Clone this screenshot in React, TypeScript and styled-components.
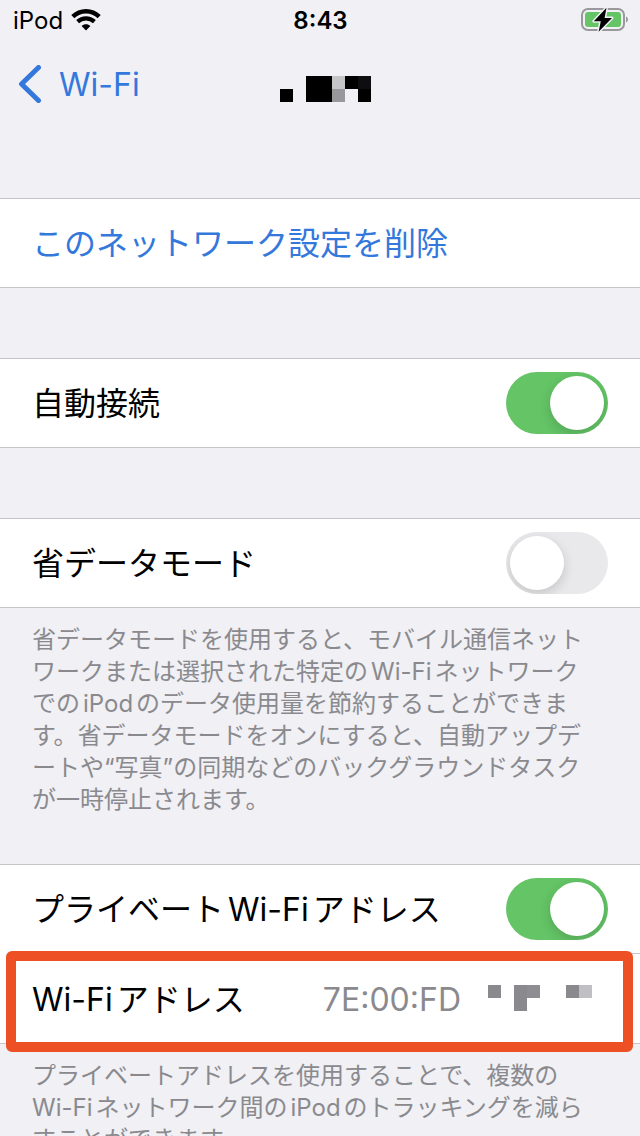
import React, { useState } from "react";
import styled, { createGlobalStyle } from "styled-components";

const GlobalStyle = createGlobalStyle`
  *, *::before, *::after { box-sizing: border-box; }
  body {
    margin: 0;
    background: #f0f0f5;
    color: #000;
    font-family: Inter, "Noto Sans CJK JP", sans-serif;
    font-weight: 400;
    text-autospace: normal;
  }
  button, input { font: inherit; }
`;

const Screen = styled.div`
  height: 100vh;
  overflow: hidden;
  display: flex;
  flex-direction: column;
  > * { flex-shrink: 0; }
`;

const StatusBar = styled.header`
  display: grid;
  grid-template-columns: 1fr auto 1fr;
  align-items: center;
  height: 40px;
  padding: 0 12px 0 13px;
  font-size: 24px;
`;

const Carrier = styled.div`
  display: flex;
  align-items: center;
  gap: 8px;
`;

const Clock = styled.time`
  font-weight: 600;
`;

const Battery = styled.svg`
  justify-self: end;
`;

const NavBar = styled.nav`
  display: grid;
  grid-template-columns: 1fr auto 1fr;
  align-items: center;
  height: 88px;
  padding: 0 18px;
`;

const BackLink = styled.a`
  display: flex;
  align-items: center;
  gap: 17px;
  color: #3478dc;
  font-size: 32px;
  text-decoration: none;
`;

const NetworkName = styled.h1`
  display: flex;
  margin: 10px 0 0 10px;
`;

const Settings = styled.main`
  display: flex;
  flex-direction: column;
  padding-top: 70px;
`;

const Group = styled.section`
  display: flex;
  flex-direction: column;
  padding-bottom: 70px;
`;

const NotedGroup = styled(Group)`
  padding-bottom: 48px;
`;

const Rows = styled.div`
  background: #fff;
  border-top: 1px solid #c6c6ca;
  border-bottom: 1px solid #c6c6ca;
`;

const Row = styled.div`
  position: relative;
  display: flex;
  align-items: center;
  justify-content: space-between;
  height: 88px;
  padding: 0 32px;
  font-size: 32px;
  line-height: 48px;
`;

const RowLabel = styled.label`
  padding-top: 2px;
`;

const AddressRow = styled(Row)`
  height: 90px;
  &::before {
    content: "";
    position: absolute;
    top: 0;
    left: 32px;
    right: 0;
    height: 1px;
    background: #c6c6ca;
  }
`;

const AddressText = styled.span`
  padding-top: 4px;
`;

const Highlight = styled.div`
  position: absolute;
  inset: -2px 7px -9px 6px;
  border: 10px solid #ee5026;
  border-radius: 6px;
  pointer-events: none;
`;

const RowButton = styled.button`
  display: block;
  width: 100%;
  height: 88px;
  padding: 2px 32px 0;
  border: 0;
  background: none;
  color: #3478dc;
  font-size: 32px;
  line-height: 48px;
  text-align: left;
`;

const Value = styled.div`
  display: flex;
  align-items: center;
  gap: 27px;
  padding-right: 16px;
  color: #8a8a8e;
`;

const Switch = styled.input`
  appearance: none;
  width: 102px;
  height: 62px;
  margin: 0;
  padding: 4px;
  border-radius: 31px;
  background: #e9e9eb;
  overflow: hidden;
  &::before {
    content: "";
    display: block;
    width: 54px;
    height: 54px;
    border-radius: 50%;
    background: #fff;
    box-shadow: 0 4px 12px rgba(0, 0, 0, 0.16);
  }
  &:checked { background: #64c466; }
  &:checked::before { margin-left: 40px; }
`;

const Note = styled.p`
  margin: 0;
  padding: 16px 32px 0;
  color: #8a8a8e;
  font-size: 24px;
  line-height: 32px;
  white-space: nowrap;
`;

type Cell = [column: number, row: number, color: string];

const MosaicDrawing = styled.svg`
  display: block;
`;

const Mosaic = ({ cells, columns, label }: { cells: Cell[]; columns: number; label: string }) => (
  <MosaicDrawing width={columns * 13} height={26} role="img" aria-label={label} shapeRendering="crispEdges">
    {cells.map(([column, row, color]) => (
      <rect key={`${column}-${row}`} x={column * 13} y={row * 13} width={13} height={13} fill={color} />
    ))}
  </MosaicDrawing>
);

const nameCells: Cell[] = [
  [0, 1, "#000"], [2, 0, "#000"], [3, 0, "#000"], [2, 1, "#000"], [3, 1, "#000"],
  [4, 0, "#c5c5c7"], [4, 1, "#98989a"], [5, 0, "#000"], [6, 0, "#0e0e10"], [6, 1, "#000"],
];

const addressCells: Cell[] = [
  [0, 0, "#8a8a8e"], [2, 0, "#8a8a8e"], [3, 0, "#8e8e92"], [2, 1, "#8a8a8e"],
  [6, 0, "#8a8a8e"], [7, 0, "#bfbfc4"],
];

const SwitchRow = ({ id, label, initial }: { id: string; label: string; initial: boolean }) => {
  const [on, setOn] = useState(initial);
  return (
    <Row>
      <RowLabel htmlFor={id}>{label}</RowLabel>
      <Switch id={id} type="checkbox" role="switch" checked={on} onChange={() => setOn(!on)} />
    </Row>
  );
};

export default function App() {
  return (
    <Screen lang="ja">
      <GlobalStyle />
      <StatusBar>
        <Carrier>
          <span>iPod</span>
          <svg width="30" height="22" viewBox="0 0 30 22" fill="none" stroke="#000" aria-hidden="true">
            <path d="M1.800 7.600C9.200.4 20.800.4 28.200 7.600" strokeWidth="4.400" />
            <path d="M6.600 12.600c4.800-4.400 12-4.400 16.800 0" strokeWidth="4.200" />
            <path d="M10.600 17c2.500-2.400 6.300-2.400 8.800 0L15 21.400z" fill="#000" stroke="none" />
          </svg>
        </Carrier>
        <Clock>8:43</Clock>
        <Battery width="49" height="28" viewBox="0 0 49 28" aria-hidden="true">
          <rect x="3" y="3" width="42" height="21" rx="6" fill="none" stroke="#98989d" strokeWidth="2" />
          <rect x="6" y="6" width="36" height="15" rx="3" fill="#64c466" />
          <path d="M47 10.500c2.600 1 2.600 5 0 6z" fill="#98989d" />
          <path
            d="M27.500 1.800 14.800 15.200h7L19.600 25.800 33 12h-7.400z"
            fill="#000" stroke="#f0f0f5" strokeWidth="3" paintOrder="stroke" strokeLinejoin="round"
          />
        </Battery>
      </StatusBar>
      <NavBar>
        <BackLink href="#wifi">
          <svg width="24" height="38" viewBox="0 0 24 38" fill="none" stroke="currentColor" strokeWidth="5" strokeLinecap="round" strokeLinejoin="round" aria-hidden="true">
            <path d="M20.500 2.500 3.500 19l17 16.500" />
          </svg>
          Wi-Fi
        </BackLink>
        <NetworkName>
          <Mosaic cells={nameCells} columns={7} label="ネットワーク名" />
        </NetworkName>
      </NavBar>
      <Settings>
        <Group>
          <Rows>
            <RowButton type="button">このネットワーク設定を削除</RowButton>
          </Rows>
        </Group>
        <Group>
          <Rows>
            <SwitchRow id="auto-join" label="自動接続" initial={true} />
          </Rows>
        </Group>
        <NotedGroup>
          <Rows>
            <SwitchRow id="low-data" label="省データモード" initial={false} />
          </Rows>
          <Note>
            省データモードを使用すると、モバイル通信ネット<br />
            ワークまたは選択された特定のWi-Fiネットワーク<br />
            でのiPodのデータ使用量を節約することができま<br />
            す。省データモードをオンにすると、自動アップデ<br />
            ートや“写真”の同期などのバックグラウンドタスク<br />
            が一時停止されます。
          </Note>
        </NotedGroup>
        <Group>
          <Rows>
            <SwitchRow id="private-address" label="プライベートWi-Fiアドレス" initial={true} />
            <AddressRow>
              <AddressText>Wi-Fiアドレス</AddressText>
              <Value>
                <AddressText>7E:00:FD</AddressText>
                <Mosaic cells={addressCells} columns={8} label="アドレスの続き" />
              </Value>
              <Highlight />
            </AddressRow>
          </Rows>
          <Note>
            プライベートアドレスを使用することで、複数の<br />
            Wi-Fiネットワーク間のiPodのトラッキングを減ら<br />
            すことができます。
          </Note>
        </Group>
      </Settings>
    </Screen>
  );
}
